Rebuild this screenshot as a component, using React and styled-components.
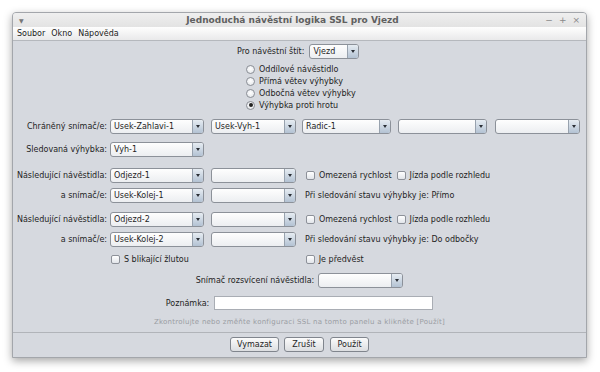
import React from "react";
import styled, { createGlobalStyle } from "styled-components";

const Global = createGlobalStyle`
  html, body { margin: 0; padding: 0; background: #ffffff; }
  body { font-family: "DejaVu Sans", "Liberation Sans", sans-serif; font-size: 8px; color: #1e1e1e; }
  * { box-sizing: border-box; }
`;

const Page = styled.div`
  width: 600px;
  height: 372px;
  padding: 12px 0 0 12px;
`;

const Window = styled.div`
  width: 575px;
  height: 346px;
  border: 1px solid #a3a6ab;
  border-radius: 4px 4px 0 0;
  box-shadow: 0 3px 9px rgba(0, 0, 0, 0.35);
  display: flex;
  flex-direction: column;
  background: #d6d9df;
  overflow: hidden;
`;

const TitleBar = styled.div`
  height: 14px;
  flex: none;
  display: flex;
  align-items: center;
  padding: 0 6px 0 6px;
  background: linear-gradient(#efefef, #e3e3e3);
`;

const Title = styled.div`
  flex: 1;
  text-align: center;
  font-weight: bold;
  font-size: 9px;
  color: #606060;
`;

const TitleMenu = styled.span`
  font-size: 6px;
  color: #777;
  width: 20px;
`;

const Controls = styled.div`
  display: flex;
  gap: 6px;
  color: #8a8a8a;
  font-size: 9px;
  width: 34px;
  justify-content: flex-end;
`;

const MenuBar = styled.div`
  height: 14px;
  flex: none;
  display: flex;
  align-items: center;
  gap: 6px;
  padding: 0 0 0 4px;
  background: linear-gradient(#fefefe, #e9e9ea);
  border-bottom: 1px solid #b5b8bd;
  color: #222;
`;

const Content = styled.div`
  flex: 1;
  display: flex;
  flex-direction: column;
`;

const Row = styled.div`
  display: flex;
  align-items: center;
  margin-top: ${(p) => p.$mt || 0}px;
  justify-content: ${(p) => (p.$center ? "center" : "flex-start")};
  padding-left: ${(p) => p.$pl || 0}px;
`;

const Label = styled.span`
  width: 94px;
  text-align: right;
  margin-right: 3px;
  white-space: nowrap;
  flex: none;
`;

const Plain = styled.span`
  white-space: nowrap;
  margin-left: ${(p) => p.$ml || 0}px;
  margin-right: ${(p) => p.$mr || 0}px;
`;

const ComboBox = styled.div`
  width: ${(p) => p.$w}px;
  height: 15px;
  flex: none;
  margin-left: ${(p) => p.$ml || 0}px;
  border: 1px solid #8c9199;
  border-radius: 3px;
  background: linear-gradient(#fefefe, #eceef1);
  display: flex;
  align-items: center;
  overflow: hidden;
`;

const ComboText = styled.span`
  flex: 1;
  padding-left: 3px;
  white-space: nowrap;
  overflow: hidden;
`;

const ComboArrow = styled.span`
  width: 11px;
  height: 100%;
  border-left: 1px solid #98a2ae;
  background: linear-gradient(#e6ecf2, #b3c2d3);
  display: flex;
  align-items: center;
  justify-content: center;
  &::after {
    content: "";
    border-left: 2.5px solid transparent;
    border-right: 2.5px solid transparent;
    border-top: 3px solid #2a2f36;
  }
`;

const Combo = ({ w, ml, children }) => (
  <ComboBox $w={w} $ml={ml}>
    <ComboText>{children}</ComboText>
    <ComboArrow />
  </ComboBox>
);

const RadioGroup = styled.div`
  display: flex;
  flex-direction: column;
  margin-top: 4px;
  padding-left: 233px;
`;

const RadioRow = styled.div`
  height: 12px;
  display: flex;
  align-items: center;
  gap: 4px;
`;

const RadioDot = styled.span`
  width: 9px;
  height: 9px;
  border-radius: 50%;
  border: 1px solid #8a8e95;
  background: radial-gradient(circle at 50% 40%, #ffffff, #dfe2e7);
  display: flex;
  align-items: center;
  justify-content: center;
  &::after {
    content: "";
    width: 4px;
    height: 4px;
    border-radius: 50%;
    background: #222;
    display: ${(p) => (p.$on ? "block" : "none")};
  }
`;

const CheckBox = styled.span`
  width: 9px;
  height: 9px;
  flex: none;
  border: 1px solid #8d9199;
  border-radius: 2px;
  background: linear-gradient(#ffffff, #e2e5ea);
  margin-left: ${(p) => p.$ml || 0}px;
  margin-right: 4px;
`;

const TextInput = styled.div`
  width: 219px;
  height: 14px;
  background: #ffffff;
  border: 1px solid #a9adb4;
`;

const Hint = styled.div`
  margin-top: 8px;
  text-align: center;
  color: #9a9da3;
  font-size: 7px;
  letter-spacing: 0.25px;
`;

const Footer = styled.div`
  margin-top: auto;
  height: 25px;
  border-top: 1px solid #b1b4b9;
  display: flex;
  justify-content: center;
  align-items: flex-start;
  padding-top: 4px;
  padding-left: 0px;
`;

const Button = styled.button`
  height: 15px;
  width: ${(p) => p.$w}px;
  margin-left: ${(p) => p.$ml || 0}px;
  padding: 0;
  font-family: "DejaVu Sans", "Liberation Sans", sans-serif;
  font-size: 8px;
  color: #1e1e1e;
  border: 1px solid #80858d;
  border-radius: 3px;
  background: linear-gradient(#fbfbfb, #dcdee1);
  line-height: 13px;
  text-align: center;
`;

export default function App() {
  return (
    <>
      <Global />
      <Page>
        <Window>
          <TitleBar>
            <TitleMenu>▼</TitleMenu>
            <Title>Jednoduchá návěstní logika SSL pro Vjezd</Title>
            <Controls>
              <span>−</span>
              <span>+</span>
              <span>×</span>
            </Controls>
          </TitleBar>
          <MenuBar>
            <span>Soubor</span>
            <span>Okno</span>
            <span>Nápověda</span>
          </MenuBar>
          <Content>
            <Row $mt={3} $pl={224}>
              <Plain $mr={5}>Pro návěstní štít:</Plain>
              <Combo w={50}>Vjezd</Combo>
            </Row>
            <RadioGroup>
              <RadioRow><RadioDot />Oddílové návěstidlo</RadioRow>
              <RadioRow><RadioDot />Přímá větev výhybky</RadioRow>
              <RadioRow><RadioDot />Odbočná větev výhybky</RadioRow>
              <RadioRow><RadioDot $on />Výhybka proti hrotu</RadioRow>
            </RadioGroup>

            <Row $mt={8}>
              <Label>Chráněný snímač/e:</Label>
              <Combo w={94}>Usek-Zahlavi-1</Combo>
              <Combo w={85} ml={7}>Usek-Vyh-1</Combo>
              <Combo w={89} ml={6}>Radic-1</Combo>
              <Combo w={89} ml={7}></Combo>
              <Combo w={85} ml={8}></Combo>
            </Row>
            <Row $mt={8}>
              <Label>Sledovaná výhybka:</Label>
              <Combo w={94}>Vyh-1</Combo>
            </Row>

            <Row $mt={11}>
              <Label>Následující návěstidla:</Label>
              <Combo w={94}>Odjezd-1</Combo>
              <Combo w={85} ml={7}></Combo>
              <CheckBox $ml={10} />
              <Plain>Omezená rychlost</Plain>
              <CheckBox $ml={5} />
              <Plain>Jízda podle rozhledu</Plain>
            </Row>
            <Row $mt={5}>
              <Label>a snímač/e:</Label>
              <Combo w={94}>Usek-Kolej-1</Combo>
              <Combo w={85} ml={7}></Combo>
              <Plain $ml={9}>Při sledování stavu výhybky je: Přímo</Plain>
            </Row>

            <Row $mt={9}>
              <Label>Následující návěstidla:</Label>
              <Combo w={94}>Odjezd-2</Combo>
              <Combo w={85} ml={7}></Combo>
              <CheckBox $ml={10} />
              <Plain>Omezená rychlost</Plain>
              <CheckBox $ml={5} />
              <Plain>Jízda podle rozhledu</Plain>
            </Row>
            <Row $mt={5}>
              <Label>a snímač/e:</Label>
              <Combo w={94}>Usek-Kolej-2</Combo>
              <Combo w={85} ml={7}></Combo>
              <Plain $ml={9}>Při sledování stavu výhybky je: Do odbočky</Plain>
            </Row>

            <Row $mt={8} $pl={98}>
              <CheckBox />
              <Plain>S blikající žlutou</Plain>
              <CheckBox $ml={117} />
              <Plain>Je předvěst</Plain>
            </Row>

            <Row $mt={9} $center>
              <Plain $mr={4}>Snímač rozsvícení návěstidla:</Plain>
              <Combo w={85}></Combo>
            </Row>

            <Row $mt={8} $center>
              <Plain $mr={5}>Poznámka:</Plain>
              <TextInput />
            </Row>

            <Hint>Zkontrolujte nebo změňte konfiguraci SSL na tomto panelu a klikněte [Použít]</Hint>

            <Footer>
              <Button $w={49}>Vymazat</Button>
              <Button $w={40} $ml={5}>Zrušit</Button>
              <Button $w={39} $ml={6}>Použít</Button>
            </Footer>
          </Content>
        </Window>
      </Page>
    </>
  );
}
